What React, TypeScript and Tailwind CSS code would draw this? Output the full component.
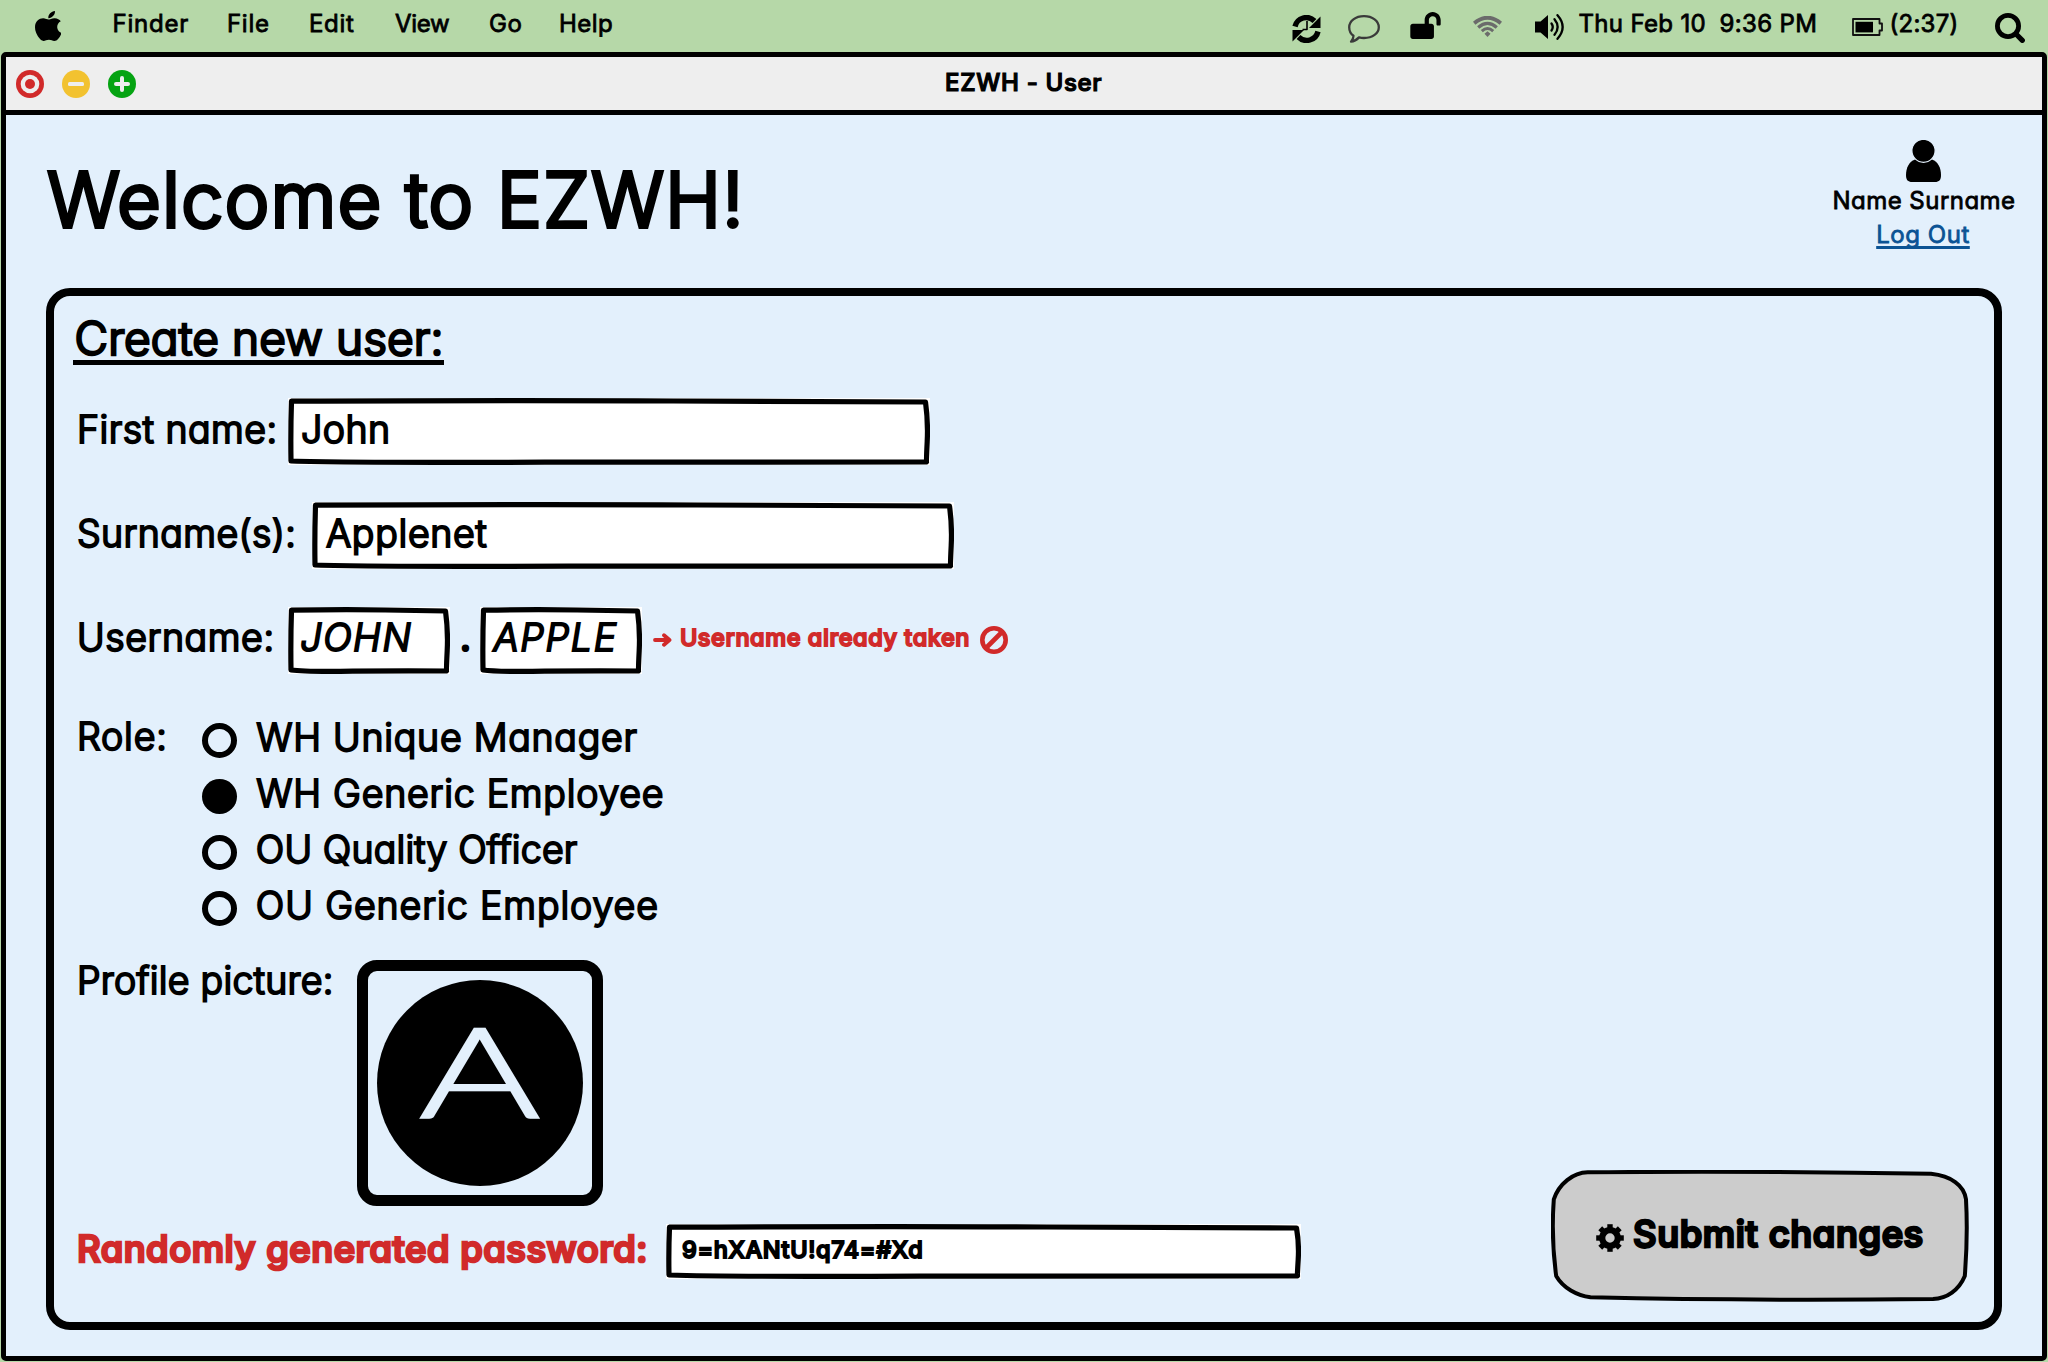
import React from "react";
import { FaLockOpen } from "react-icons/fa";

/* Pen weights that give the lettering its rounded marker look */
const pen = {
  sm: "text-[24px] font-normal [-webkit-text-stroke:0.8px] leading-9",
  smBold: "text-[23.500px] font-medium [-webkit-text-stroke:1.8px] leading-9",
  md: "text-[37.5px] font-light [-webkit-text-stroke:2px] leading-[48px]",
  mdBold: "text-[36.500px] font-medium [-webkit-text-stroke:2.6px] leading-[48px]",
};

function AppleIcon() {
  return (
    <svg viewBox="4 32 368 448" className="h-[30px] w-[26px] mt-[3px]" preserveAspectRatio="none">
      <path d="M318.7 268.7c-.2-36.7 16.4-64.4 50-84.8-18.8-26.9-47.2-41.7-84.7-44.6-35.5-2.8-74.3 20.7-88.5 20.7-15 0-49.4-19.7-76.4-19.7C63.3 141.2 4 184.8 4 273.5q0 39.3 14.4 81.2c12.8 36.7 59 126.7 107.2 125.2 25.2-.6 43-17.9 75.8-17.9 31.8 0 48.3 17.9 76.4 17.9 48.6-.7 90.4-82.5 102.6-119.3-65.2-30.7-61.7-90-61.7-91.9zm-56.6-164.2c27.3-32.4 24.8-61.9 24-72.5-24.1 1.4-52 16.4-67.9 34.9-17.5 19.8-27.8 44.3-25.6 71.9 26.1 2 49.9-11.4 69.5-34.3z" />
    </svg>
  );
}

function SyncIcon() {
  return (
    <svg viewBox="0 0 29 28" className="h-7 w-[29px] mt-[9px]" fill="none" stroke="#000">
      <path d="M3 11.5A11.6 11.6 0 0 1 22.5 6" strokeWidth="5.400" />
      <path d="M26 16.5A11.6 11.6 0 0 1 6.5 22" strokeWidth="5.400" />
      <path d="M28.500 1.500v11.500H17z" fill="#000" stroke="none" />
      <path d="M.5 26.500V15h11.500z" fill="#000" stroke="none" />
      <path d="M15 6v8.500h-4.500" strokeWidth="1.600" />
    </svg>
  );
}

function ChatIcon() {
  return (
    <svg viewBox="0 0 32 28" className="h-7 w-8 mt-[9px]" fill="none" stroke="#3a3a3a" strokeWidth="2.300" strokeLinejoin="round">
      <path d="M16 1.200C24.500 1.200 30.800 6 30.800 12.200S24.500 23 16 23c-1.800 0-3.400-.2-5-.6C8.800 24.800 6 26.500 3 26.700c1.600-1.700 2.500-3.800 2.500-5.900C2.700 18.800 1.200 15.800 1.200 12.200 1.200 6 7.500 1.200 16 1.200Z" />
    </svg>
  );
}

function WifiIcon() {
  return (
    <svg viewBox="0 0 29 21" className="h-[21px] w-[29px] mt-[4px]" fill="none" stroke="#6b6b6b">
      <path d="M1.200 7.200Q14.500-3.800 27.800 7.200" strokeWidth="3.800" />
      <path d="M5.200 11.400Q14.500 3.400 23.800 11.400" strokeWidth="3.300" />
      <path d="M8.800 15.100Q14.500 10 20.200 15.100" strokeWidth="3" />
      <path d="M14.500 15.200l3 2.500-3 3.300-3-3.300z" fill="#6b6b6b" stroke="none" />
    </svg>
  );
}

function VolumeIcon() {
  return (
    <svg viewBox="0 0 31 26" className="h-[26px] w-[31px] mt-[5px]" fill="none" stroke="#000" strokeWidth="2.300" strokeLinecap="round">
      <path d="M0 7.500h5.500L13 1v24l-7.500-6.500H0z" fill="#000" stroke="none" />
      <path d="M16.500 9.500Q19 13 16.500 16.500" />
      <path d="M19.500 5.200Q25.800 13 19.500 20.800" />
      <path d="M22.500 1.200Q32.800 13 22.500 24.800" />
    </svg>
  );
}

function BatteryIcon() {
  return (
    <svg viewBox="0 0 31 18" className="h-[18px] w-[31px] mt-[5px]" fill="none" stroke="#111" strokeWidth="1.800" strokeLinejoin="round">
      <path d="M1 1h26.500v4.500H30v7H27.500V17H1z" />
      <path d="M3.500 3.800h17.500v10.600H3.500z" fill="#000" stroke="none" />
    </svg>
  );
}

function SearchIcon() {
  return (
    <svg viewBox="0 0 30 30" className="h-[30px] w-[30px] mt-[7px]" fill="none" stroke="#000" strokeLinecap="round">
      <circle cx="13" cy="13" r="10.600" strokeWidth="4.800" />
      <path d="M21.500 21.500l5.800 5.800" strokeWidth="5.200" />
    </svg>
  );
}

function UserIcon() {
  return (
    <svg viewBox="0 0 35 42" className="mr-[2px] h-[42px] w-[35px]">
      <path d="M9 19.500h17c6 2 9 8.500 9 15.500 0 5-2 7-6 7H6c-4 0-6-2-6-7 0-7 3-13.500 9-15.500Z" />
      <ellipse cx="17.500" cy="10.800" rx="11.600" ry="11.500" stroke="#e3f0fc" strokeWidth="1.200" />
    </svg>
  );
}

function GearIcon() {
  const teeth = [0, 45, 90, 135, 180, 225, 270, 315];
  return (
    <svg viewBox="-14 -14 28 28" className="h-7 w-7 mt-[4px]" fill="none" stroke="#000">
      <circle r="7.800" strokeWidth="6.200" />
      {teeth.map((a) => (
        <path key={a} d="M0-9V-13.800" strokeWidth="5.400" transform={`rotate(${a})`} />
      ))}
    </svg>
  );
}

function ArrowIcon() {
  return (
    <svg viewBox="0 0 19 14" className="h-[14px] w-[19px]" fill="none" stroke="#d12a2a" strokeWidth="3.800" strokeLinecap="round" strokeLinejoin="round">
      <path d="M2 7h14M11 2.200L16.500 7 11 11.800" />
    </svg>
  );
}

function BanIcon() {
  return (
    <svg viewBox="0 0 28 28" className="h-7 w-7" fill="none" stroke="#d12a2a" strokeWidth="4.600">
      <circle cx="14" cy="14" r="11.700" />
      <path d="M22 6L6 22" />
    </svg>
  );
}

function CloseLight() {
  return (
    <svg viewBox="0 0 28 28" className="size-7">
      <circle cx="14" cy="14" r="14" fill="#d12a2a" />
      <circle cx="14" cy="14" r="9.300" fill="#eee" />
      <circle cx="14" cy="14" r="5" fill="#d12a2a" />
    </svg>
  );
}

function MinimizeLight() {
  return (
    <svg viewBox="0 0 28 28" className="size-7">
      <circle cx="14" cy="14" r="14" fill="#f2c230" />
      <rect x="6" y="12" width="16" height="4" rx="1.500" fill="#eee" />
    </svg>
  );
}

function ZoomLight() {
  return (
    <svg viewBox="0 0 28 28" className="size-7">
      <circle cx="14" cy="14" r="14" fill="#05a312" />
      <path d="M14 8v12M8 14h12" stroke="#eee" strokeWidth="4" strokeLinecap="round" />
    </svg>
  );
}

/* White field with a slightly uneven, hand-inked outline */
function Field({ w, h, size, children }: { w: number; h: number; size: string; children: React.ReactNode }) {
  const d = `M3.5 3.200 Q${w * 0.35} 2.200 ${w * 0.6} 3 T${w - 4.5} 4 Q${w - 1.8} ${h * 0.35} ${w - 2.8} ${h * 0.65} T${w - 3.6} ${h - 3} Q${w * 0.7} ${h - 3.5} ${w * 0.4} ${h - 2.8} T3 ${h - 4} Q2.500 ${h * 0.5} 3.500 3.200Z`;
  return (
    <div className={`relative flex items-center bg-white ${size}`}>
      <svg viewBox={`0 0 ${w} ${h}`} className="absolute inset-0 h-full w-full" fill="none" stroke="#000" strokeWidth="5.200" strokeLinejoin="round">
        <path d={d} />
      </svg>
      {children}
    </div>
  );
}

const roles = [
  { label: "WH Unique Manager", tracking: "tracking-[0.75px]", on: false, x: "ml-[19.800px]" },
  { label: "WH Generic Employee", tracking: "tracking-[0.76px]", on: true, x: "ml-[19.800px]" },
  { label: "OU Quality Officer", tracking: "tracking-[0.16px]", on: false, x: "ml-[19.300px]" },
  { label: "OU Generic Employee", tracking: "tracking-[0.92px]", on: false, x: "ml-[19.300px]" },
];

function MenuBar() {
  return (
    <header className={`flex h-[52px] shrink-0 items-center pb-[4px] pl-[34.700px] pr-[23px] ${pen.sm}`}>
      <AppleIcon />
      <span className="ml-[51.800px] w-[114.400px] tracking-[0.79px]">Finder</span>
      <span className="w-[82px] tracking-[0.8px]">File</span>
      <span className="w-[86px] tracking-[0.75px]">Edit</span>
      <span className="w-[94px] tracking-[-0.25px]">View</span>
      <span className="w-[70px] tracking-[0.79px]">Go</span>
      <span className="tracking-[0.52px]">Help</span>
      <div className="ml-auto flex items-center">
        <SyncIcon />
        <div className="ml-[27px]"><ChatIcon /></div>
        <FaLockOpen className="ml-[30px] mt-[2px] h-[27px] w-[31px]" />
        <div className="ml-8"><WifiIcon /></div>
        <div className="ml-[33px]"><VolumeIcon /></div>
        <span className="ml-[12.400px] w-[141px] tracking-[0.35px]">Thu Feb 10</span>
        <span className="w-[132.600px] tracking-[0.37px]">9:36 PM</span>
        <BatteryIcon />
        <span className="ml-[6.400px] w-[105.600px] tracking-[0.3px]">(2:37)</span>
        <SearchIcon />
      </div>
    </header>
  );
}

export default function App() {
  return (
    <div className="flex h-[1362px] w-[2048px] flex-col overflow-hidden whitespace-nowrap bg-[#b6d8a8] pb-px font-['Inter',sans-serif] text-black [font-feature-settings:'cv11'] [stroke-linejoin:round]">
      <MenuBar />
      <div className="ml-px mr-px flex min-h-0 flex-1 flex-col rounded-[5px] border-[5px] border-black bg-[#e3f0fc]">
        <div className="flex h-[58px] shrink-0 items-center border-b-[5px] border-black bg-[#eee] pl-[9.700px]">
          <div className="flex w-[929.400px] gap-[18px] pt-px">
            <CloseLight />
            <MinimizeLight />
            <ZoomLight />
          </div>
          <span className="pb-[2px] text-[24px] font-medium leading-9 tracking-[0.68px] [-webkit-text-stroke:1.2px]">EZWH - User</span>
        </div>

        <div className="flex h-[173px] shrink-0 justify-between pl-[41.200px] pr-[23px]">
          <h1 className="text-[75px] font-light leading-[170px] tracking-[1.500px] [-webkit-text-stroke:4px]">Welcome to EZWH!</h1>
          <div className={`flex w-[190px] flex-col items-center pt-[25px] ${pen.sm}`}>
            <UserIcon />
            <span className="pt-px leading-9 tracking-[0.48px]">Name Surname</span>
            <a className="mr-[2px] leading-[31px] tracking-[0.54px] text-[#0b5394] underline decoration-[2.500px] underline-offset-[2.500px] [text-decoration-skip-ink:none]">Log Out</a>
          </div>
        </div>

        <section className="ml-10 flex h-[1042px] w-[1956px] shrink-0 justify-between rounded-[24px] border-8 border-black">
          <div className="flex flex-col items-start pl-[22px]">
            <h2 className="-ml-[3px] mt-5 box-content h-11 w-[369px] border-b-[5px] border-black pl-[1.500px] text-[46px] font-light leading-[45px] tracking-[0.14px] [-webkit-text-stroke:2.500px]">
              Create new user:
            </h2>

            <div className={`mt-[33px] flex items-center ${pen.md}`}>
              <label className="w-[212.400px] pb-[3px] pl-px tracking-[0.5px]">First name:</label>
              <Field w={642} h={67} size="h-[67px] w-[642px] pl-[12.500px] pb-[3px]">
                <span className="tracking-[0.54px]">John</span>
              </Field>
            </div>

            <div className={`mt-[37px] flex items-center ${pen.md}`}>
              <label className="w-[236.400px] pb-[3px] pl-px tracking-[0.4px]">Surname(s):</label>
              <Field w={642} h={67} size="h-[67px] w-[642px] pl-[13.500px] pb-[3px]">
                <span className="tracking-[0.71px]">Applenet</span>
              </Field>
            </div>

            <div className={`mt-[37.500px] flex items-center ${pen.md}`}>
              <label className="w-[212.400px] pb-1 pl-px tracking-[0.6px]">Username:</label>
              <Field w={162} h={67} size="h-[67px] w-[162px] pl-3 pb-1">
                <span className="italic tracking-[1.500px]">JOHN</span>
              </Field>
              <span className="w-[30px] pb-1 text-center font-medium">.</span>
              <Field w={162} h={67} size="h-[67px] w-[162px] pl-[13px] pb-1">
                <span className="italic tracking-[1.700px]">APPLE</span>
              </Field>
              <div className={`ml-[10.500px] flex items-center text-[#d12a2a] ${pen.smBold}`}>
                <ArrowIcon />
                <span className="ml-[8px] w-[300px] pb-[4px] tracking-[0.57px]">Username already taken</span>
                <BanIcon />
              </div>
            </div>

            <div className={`mt-[39px] flex items-start ${pen.md}`}>
              <span className="h-14 w-[125.500px] pl-px leading-[47px] tracking-[0.8px]">Role:</span>
              <div className="flex flex-col">
                {roles.map((r) => (
                  <label key={r.label} className="flex h-14 items-center">
                    <span className={r.on ? "size-[35px] rounded-full bg-black" : "size-[35px] rounded-full border-[6px] border-black"} />
                    <span className={`pb-[5px] ${r.x} ${r.tracking}`}>{r.label}</span>
                  </label>
                ))}
              </div>
            </div>

            <div className={`mt-[23px] flex items-start ${pen.md}`}>
              <span className="w-[281px] pl-px leading-[41px] tracking-[0.28px]">Profile picture:</span>
              <div className="flex size-[246px] items-center justify-center rounded-[20px] border-[11px] border-black">
                <div className="flex size-[206px] items-center justify-center rounded-full bg-black pb-[28px] font-['Lato',sans-serif] text-[124px] font-light leading-none text-[#e3f0fc] [-webkit-text-stroke:2.400px]">
                  <span className="scale-x-[1.480]">A</span>
                </div>
              </div>
            </div>

            <div className="mt-[18.500px] flex items-center">
              <span className={`w-[590px] pb-[5px] pl-px tracking-[0.480px] text-[#d12a2a] ${pen.mdBold}`}>Randomly generated password:</span>
              <Field w={635} h={55} size="h-[55px] w-[635px] pl-4 pb-[4px]">
                <span className={`tracking-[0.620px] ${pen.smBold}`}>9=hXANtU!q74=#Xd</span>
              </Field>
            </div>
          </div>

          <button className={`relative mb-5 mr-[25px] flex h-[132px] w-[418px] items-center self-end pl-[44.500px] ${pen.mdBold}`}>
            <svg viewBox="0 0 418 132" className="absolute inset-0 h-full w-full" fill="#ccc" stroke="#000" strokeWidth="4" strokeLinejoin="round">
              <path d="M2.800 29.300C8 14 22 2.500 36.700 2.300Q208 .8 380 3.800C400 6 413 15 415 29.300Q417 65 413.800 106C408 120 396 128.500 382 129Q200 131 39.500 127.300C26 125.500 12 118 5.200 106Q0 68 2.800 29.300Z" />
            </svg>
            <span className="relative"><GearIcon /></span>
            <span className="relative ml-[9.500px] pb-[5px] tracking-[0.550px]">Submit changes</span>
          </button>
        </section>
      </div>
    </div>
  );
}
